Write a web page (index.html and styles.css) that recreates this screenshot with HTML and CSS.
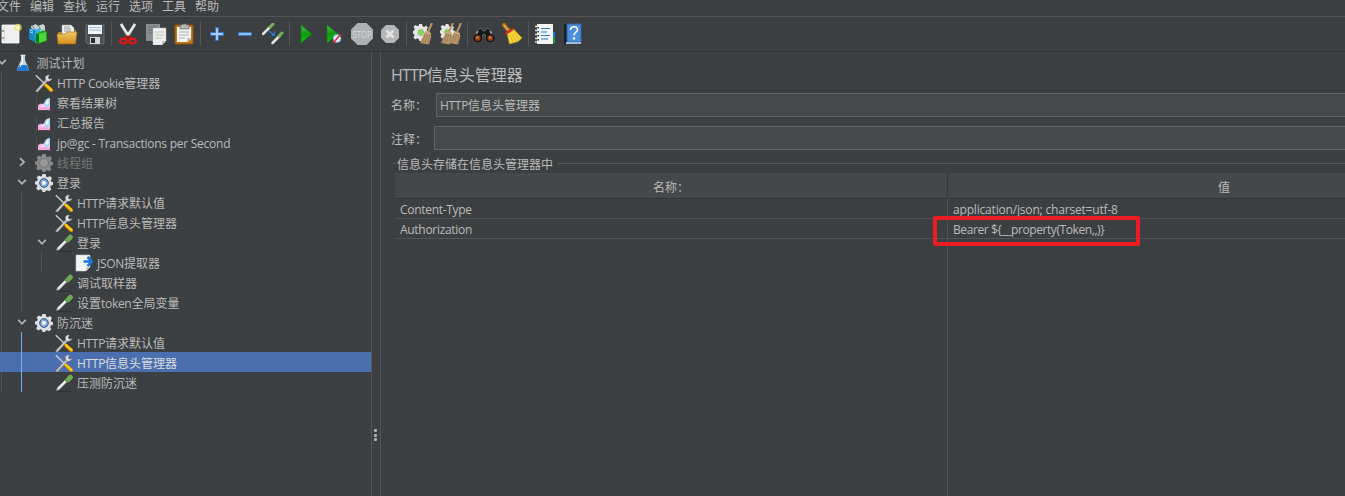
FILE: index.html
```
<!DOCTYPE html>
<html lang="zh-CN">
<head>
<meta charset="utf-8">
<title>HTTP信息头管理器</title>
<link rel="stylesheet" href="styles.css">
</head>
<body>
<svg class="defs" aria-hidden="true">
<defs>
<linearGradient id="gGreen" x1="0" y1="0" x2="0" y2="1"><stop offset="0" stop-color="#5cb85c"/><stop offset=".5" stop-color="#0c9a10"/><stop offset="1" stop-color="#14c414"/></linearGradient>
<linearGradient id="gGold" x1="0" y1="0" x2="0" y2="1"><stop offset="0" stop-color="#f3c767"/><stop offset="1" stop-color="#d19020"/></linearGradient>
<radialGradient id="gBall"><stop offset="0" stop-color="#eaf3fc"/><stop offset="1" stop-color="#4a7cba"/></radialGradient>
<symbol id="tools" viewBox="0 0 18 18"><path d="M2 17 12 6" stroke="#777" stroke-width="3" stroke-linecap="round"/><path d="M2 17 12 6" stroke="#d0d0d0" stroke-width="1.500" stroke-linecap="round"/><path d="M13 1c-2 .5-3 2-2.600 4l1.600 2c2 .8 4.500-.5 5-2.500l-2.500.8-1.500-1.600 1.500-2.500z" fill="#e0e0e0" stroke="#777" stroke-width=".4"/><path d="M.8 1.200 11 11" stroke="#c8c8c8" stroke-width="1.500"/><path d="m11 11.500 5.200 5" stroke="#bd8500" stroke-width="3.400" stroke-linecap="round"/><path d="m11 11 5.500 5" stroke="#ffc414" stroke-width="2.400" stroke-linecap="round"/></symbol>
<symbol id="chart" viewBox="0 0 18 18"><path d="M1.500 2v14.500H16" fill="none" stroke="#5b5d5f" stroke-dasharray="1 1"/><path d="m3 11 3-1.500L9 11l6 0v5H3z" fill="#f3b4e0"/><path d="m3 16 5-6 7-6v12z" fill="#f9dcf3"/><path d="M9 11c0-4 2-7 6-7v7l-3 3z" fill="#a9d0f0"/><path d="m10.500 9 3-4.500v5l-2 2z" fill="#f3faff"/><path d="m3 12 4 1.500 3-1.500 2 2 3-1v3H3z" fill="#f3a8dc"/></symbol>
<symbol id="gear" viewBox="0 0 18 18"><path d="m7.300 0 3.400 0 .5 2.600 1.600.7L15 2l2 2.200-1.300 2.200.6 1.400L18 8v3l-2.100.6-.7 1.700 1.200 2-2.200 2-2.100-1.100-1.500.6-.6 1.700H7.500L7 15.900l-1.700-.7-2 1.200-2.200-2 1.200-2.200-.6-1.500L0 10.200V7.600L2.100 7l.7-1.600-1.200-2 2.200-2 2 1.100 1.100-.5z" fill="#dedfe0"/><circle cx="9" cy="9" r="4.400" fill="url(#gBall)" stroke="#41699d" stroke-width="1"/><path d="m7.500 6.500 4 2.500-4 2.500z" fill="#fff"/></symbol>
<symbol id="gearOff" viewBox="0 0 18 18"><path d="m7.300 0 3.400 0 .5 2.600 1.600.7L15 2l2 2.200-1.300 2.200.6 1.400L18 8v3l-2.100.6-.7 1.700 1.200 2-2.200 2-2.100-1.100-1.500.6-.6 1.700H7.500L7 15.900l-1.700-.7-2 1.200-2.200-2 1.200-2.200-.6-1.500L0 10.200V7.600L2.100 7l.7-1.600-1.200-2 2.200-2 2 1.100 1.100-.5z" fill="#898989"/><circle cx="9" cy="9" r="4.500" fill="#989898" stroke="#757575"/></symbol>
<symbol id="pipette" viewBox="0 0 18 18"><path d="M3 17.500h13" stroke="#2c2f30" stroke-width="1"/><path d="m1.500 16 1-2.500 8-8 2 2-8 8-2.500 1z" fill="#dfe2df" stroke="#858985" stroke-width=".6"/><path d="m4 13 6.500-6.500" stroke="#fff"/><path d="m9.800 4.800 3.500 3.500" stroke="#3c7c2b" stroke-width="1.800"/><path d="m10.800 5.500 3-3.800c1.800-2 5 .7 3.400 2.800l-3.800 3.500z" fill="#68ad4c" stroke="#9bcd84" stroke-width=".5"/></symbol>
<symbol id="extract" viewBox="0 0 18 18"><path d="M1 1h14v12l-4 4H1z" fill="#f3f4f4" stroke="#c7caca" stroke-width=".6"/><path d="m11 17 .5-4 3.500 0z" fill="#c2c6c8"/><path d="M8.500 7.500h7M12.500 3l4.500 4.500-4.500 4.500" fill="none" stroke="#1676da" stroke-width="2.500"/></symbol>
<symbol id="flask" viewBox="0 0 18 18"><path d="M7 1h4v5l4 9c.4 1-.3 2-1.500 2h-9C3.300 17 2.600 16 3 15l4-9z" fill="#c3d6e5"/><path d="m5.500 11 7 0 2.500 4c.4 1-.3 2-1.500 2h-9C3.300 17 2.600 16 3 15z" fill="#2379cf"/><path d="M8.500 2v6L6 13" fill="none" stroke="#fff"/><path d="M6.500 1.200h5" stroke="#eef4f8"/></symbol>
<symbol id="down" viewBox="0 0 10 10"><path d="m1.200 2.800 3.800 4 3.800-4" fill="none" stroke="#afb1b3" stroke-width="1.800"/></symbol>
<symbol id="right" viewBox="0 0 10 10"><path d="m3 1.200 4 3.800-4 3.800" fill="none" stroke="#afb1b3" stroke-width="1.800"/></symbol>
<symbol id="broom" viewBox="0 0 13 22"><path d="m12 0-4 9" stroke="#bf9568" stroke-width="2"/><path d="m5.500 8 5 1.500.8 4L9 21.500 0 20z" fill="#b8976c"/><path d="m6 10-4 10m6-10-3 10m5-9-2 10" stroke="#8d6d4a" stroke-width=".6"/><path d="m5 9.500 6 1.500" stroke="#d8bd91"/></symbol>
<symbol id="cog" viewBox="0 0 18 18"><path d="m6.500 0 3 0 .7 2.400 1.500.7 2.100-1.500 2 2-1.300 2.200.6 1.500 2.400.7v2.500l-2.300.8-.7 1.600 1.200 2-2 2-2.200-1.200-1.500.6L9.300 18H6.600L6 15.800l-1.600-.7-2 1.200-2-2 1.200-2.200-.6-1.400-1-.5V7.500l1.200-.7.7-1.600L.6 3l2-1.900 2.200 1.200 1.200-.5z" fill="#e4e4e4"/><circle cx="8.300" cy="9" r="3.200" fill="#83d94f" stroke="#9fbd8c"/></symbol>
</defs>
</svg>

<nav class="menu"><span>文件</span><span>编辑</span><span>查找</span><span>运行</span><span>选项</span><span>工具</span><span>帮助</span></nav>

<div class="toolbar">
<svg viewBox="0 0 22 22"><path d="M2 2h17v18H2z" fill="#efefef" stroke="#fff" stroke-width=".8"/><path d="M4.500 3v16" stroke="#c9c9c9" stroke-width=".6"/><path d="M2 8h2M2 15h2" stroke="#555"/><circle cx="18" cy="4.500" r="3.800" fill="#f0e36b" opacity=".7"/><circle cx="18" cy="4.500" r="1.800" fill="#fffbd0"/></svg>
<svg viewBox="0 0 22 22"><path d="m3 3 5-2 2 2 5-2 2 2v6L4 11z" fill="#c8d1d5"/><path d="m4 2 3 5M10 2l3 5" stroke="#778888"/><path d="m1 5 6 2v12l-6-3z" fill="#1787cc"/><path d="m2 7 3 1M2 9l3 1" stroke="#9be0ff"/><path d="m7 7 5-2v14l-5 1z" fill="#2eb4e9"/><path d="m8 11 7-4 4 2v9l-9 3-3-3z" fill="#20a51a"/><path d="m11 11 7-2v8l-7 3z" fill="#4bd53c"/><path d="m8 10 3 2v9l-3-3z" fill="#087710"/></svg>
<svg viewBox="0 0 22 22"><path d="M2 9h5l2-2h11v12H2z" fill="#bd831d"/><path d="M6 2h9l3 3v9H6z" fill="#f3f3f3" stroke="#aaa" stroke-width=".5"/><path d="M8 4h6M8 6h7M8 8h7" stroke="#999"/><path d="M1 11h8l2-2h10l-1.500 12H2z" fill="url(#gGold)" stroke="#a46b10" stroke-width=".6"/></svg>
<svg viewBox="0 0 22 22"><path d="M2 2h18v19H4l-2-2z" fill="#4c4e50" stroke="#777" stroke-width=".8"/><path d="M4 2h14v9H4z" fill="#eef5fb"/><path d="M5 4.500h12M5 7h12" stroke="#9ebedb"/><path d="M6 14h10v7H6z" fill="#d4d6d7"/><path d="M7 15h4v5H7z" fill="#292b2d"/></svg>
<i class="sep"></i>
<svg viewBox="0 0 22 22"><path d="m4 1 8.500 14M18 1 9.500 15" stroke="#b7b9b9" stroke-width="3.200"/><path d="m4 1 8 12M18 1l-8 12" stroke="#f1f1f1" stroke-width="1.500"/><path d="m9 13 3 3m1-3-3 3" stroke="#b40d0d" stroke-width="2.500"/><ellipse cx="6.500" cy="18" rx="3.200" ry="2.300" fill="none" stroke="#dd1717" stroke-width="2.300"/><ellipse cx="15.500" cy="18" rx="3.200" ry="2.300" fill="none" stroke="#dd1717" stroke-width="2.300"/></svg>
<svg viewBox="0 0 22 22"><path d="M1 1h14v17H1z" fill="#8b8e90"/><path d="M3 4h9M3 7h9M3 10h9" stroke="#6b6e70"/><path d="M8 5h13v13l-4 4H8z" fill="#f0f0ee" stroke="#bbb" stroke-width=".5"/><path d="M10 9h9M10 12h9M10 15h7" stroke="#c0c0c0"/><path d="m17 22 0-4h4z" fill="#bfc1c1"/></svg>
<svg viewBox="0 0 22 22"><rect x="2" y="2" width="18" height="19" rx="1" fill="#bd7b1d" stroke="#8d5308"/><path d="M4 4h14v12l-4 3H4z" fill="#f4f4f2"/><path d="M6 9h10M6 12h10M6 15h6" stroke="#aaa"/><path d="m14 19 .5-4 3.500 0z" fill="#bbb"/><path d="M7 2h2l1-1h3l1 1h2v4H7z" fill="#b6b7b7" stroke="#676767" stroke-width=".7"/></svg>
<i class="sep"></i>
<svg viewBox="0 0 22 22"><path d="M9.500 4.500h3v5h5v3h-5v5h-3v-5h-5v-3h5z" fill="#8fc0f4" stroke="#3a75bd"/><path d="M11 6v10M6 11h10" stroke="#b5d8fa"/></svg>
<svg viewBox="0 0 22 22"><path d="M4.500 9.500h13v3h-13z" fill="#8fc0f4" stroke="#3a75bd"/></svg>
<svg viewBox="0 0 22 22"><path d="m1 11 7-7" stroke="#dfe2dd" stroke-width="2.500" stroke-linecap="round"/><path d="m8 4 3-3" stroke="#75b556" stroke-width="3" stroke-linecap="round"/><path d="m10.500 20 7-7" stroke="#dfe2dd" stroke-width="2.500" stroke-linecap="round"/><path d="m17 13 3-3" stroke="#75b556" stroke-width="3" stroke-linecap="round"/><path d="m7 8 5 4" stroke="#2c77cf" stroke-width="1.500"/><path d="m13 8 0 5H9z" fill="#2c77cf"/></svg>
<i class="sep"></i>
<svg viewBox="0 0 22 22"><path d="m6 2 11 9L6 20z" fill="url(#gGreen)" stroke="#098009" stroke-width=".7"/></svg>
<svg viewBox="0 0 22 22"><path d="m4 2 11 9L4 20z" fill="url(#gGreen)" stroke="#098009" stroke-width=".7"/><circle cx="14" cy="15.500" r="4" fill="#e4eef8" stroke="#6f9bc8"/><path d="m10 20 8-9" stroke="#db2323" stroke-width="1.500"/></svg>
<svg viewBox="0 0 22 22"><path d="M6.500 0h9L22 6.500v9L15.500 22h-9L0 15.500v-9z" fill="#aeb0b1"/><text x="11" y="14.500" text-anchor="middle" textLength="19" lengthAdjust="spacingAndGlyphs">STOP</text></svg>
<svg viewBox="0 0 22 22"><path d="M7 2h8l5 5v8l-5 5H7l-5-5V7z" fill="#b3b5b6"/><path d="m7.500 7.500 7 7m0-7-7 7" stroke="#e4e4e4" stroke-width="2.500"/></svg>
<i class="sep"></i>
<svg viewBox="0 0 22 22"><use href="#cog" x="1" y="1" width="17" height="17"/><use href="#broom" x="8" y="0" width="13" height="22"/></svg>
<svg viewBox="0 0 22 22"><use href="#cog" x="0" y="1" width="16" height="16"/><use href="#broom" x="1" y="0" width="13" height="22"/><use href="#broom" x="9" y="0" width="13" height="22"/></svg>
<i class="sep"></i>
<svg viewBox="0 0 22 22"><path d="M5 6.500 8 5l2 3h2l2-3 3 1.500 4 8-7 3-2-6h-2l-2 6-7-3z" fill="#181819" stroke="#77797a" stroke-width=".7"/><path d="M5 8 3.500 11M17 8l1.500 3" stroke="#a2a2a2" stroke-width="1.500"/><circle cx="4.800" cy="15" r="3.600" fill="#904018" stroke="#111" stroke-width="1.500"/><circle cx="17.200" cy="15" r="3.600" fill="#904018" stroke="#111" stroke-width="1.500"/><circle cx="4.500" cy="14.500" r="1.200" fill="#d57c42"/><circle cx="17" cy="14.500" r="1.200" fill="#d57c42"/></svg>
<svg viewBox="0 0 22 22"><path d="m3 2 5 6" stroke="#b46f1d" stroke-width="4" stroke-linecap="round"/><path d="m3 2 4 5" stroke="#e5ad53" stroke-width="1.500"/><path d="M6 10.500 12.500 6 21 15l-4 3.500L8.500 21z" fill="#f5d43c" stroke="#bf9818" stroke-width=".7"/><path d="m9 12 3 7m-1-8 4 7m-2-9 5 7" stroke="#c9a21f" stroke-width=".6"/><path d="m5 10.500 7-4.500" stroke="#d52f23" stroke-width="2.500"/></svg>
<i class="sep"></i>
<svg viewBox="0 0 22 22"><path d="M14 9h7v6h-7z" fill="#1979d4"/><path d="M14 15h7v5h-7z" fill="#16a32a"/><path d="M3 1h16v20H3z" fill="#f3f5f7"/><path d="M7 5.500h9M7 9h6M7 12.500h9M7 16h7" stroke="#287bd0" stroke-width="1.200"/><path d="M1 3.500h3M1 7.500h3M1 11.500h3M1 15.500h3M1 19h3" stroke="#ddd" stroke-width="1.500"/><path d="M3.500 4h1.500v1.500H3.500zM3.500 8h1.500v1.500H3.500zM3.500 12h1.500v1.500H3.500zM3.500 16h1.500v1.500H3.500z" fill="#222"/></svg>
<svg viewBox="0 0 22 22"><path d="M2 1h3v20H2z" fill="#1b1e21"/><path d="M5 1h14v18H5z" fill="#4c8edb" stroke="#3167aa"/><path d="M4 20h15" stroke="#9cbcdc" stroke-width="2"/><path d="M8.500 7c0-4 7-4.500 7-.5 0 3-3.500 2.500-3.500 6" fill="none" stroke="#fff" stroke-width="1.500"/><circle cx="12" cy="15.500" r="1.200" fill="#fff"/></svg>
</div>

<main class="work">
<aside class="tree">
<div class="row d0"><svg class="arrow"><use href="#down"/></svg><svg class="ico"><use href="#flask"/></svg><span>测试计划</span></div>
<div class="kids k1">
<div class="row d1"><svg class="ico"><use href="#tools"/></svg><span><b>HTTP Cookie</b>管理器</span></div>
<div class="row d1"><svg class="ico"><use href="#chart"/></svg><span>察看结果树</span></div>
<div class="row d1"><svg class="ico"><use href="#chart"/></svg><span>汇总报告</span></div>
<div class="row d1"><svg class="ico"><use href="#chart"/></svg><span><b class="tps">jp@gc - Transactions per Second</b></span></div>
<div class="row d1 off"><svg class="arrow"><use href="#right"/></svg><svg class="ico"><use href="#gearOff"/></svg><span>线程组</span></div>
<div class="row d1"><svg class="arrow"><use href="#down"/></svg><svg class="ico"><use href="#gear"/></svg><span>登录</span></div>
<div class="kids k2">
<div class="row d2"><svg class="ico"><use href="#tools"/></svg><span><b>HTTP</b>请求默认值</span></div>
<div class="row d2"><svg class="ico"><use href="#tools"/></svg><span><b>HTTP</b>信息头管理器</span></div>
<div class="row d2"><svg class="arrow"><use href="#down"/></svg><svg class="ico"><use href="#pipette"/></svg><span>登录</span></div>
<div class="kids k3"><div class="row d3"><svg class="ico"><use href="#extract"/></svg><span><b>JSON</b>提取器</span></div></div>
<div class="row d2"><svg class="ico"><use href="#pipette"/></svg><span>调试取样器</span></div>
<div class="row d2"><svg class="ico"><use href="#pipette"/></svg><span>设置<b>token</b>全局变量</span></div>
</div>
<div class="row d1"><svg class="arrow"><use href="#down"/></svg><svg class="ico"><use href="#gear"/></svg><span>防沉迷</span></div>
<div class="kids k2 active">
<div class="row d2"><svg class="ico"><use href="#tools"/></svg><span><b>HTTP</b>请求默认值</span></div>
<div class="row d2 selected"><svg class="ico"><use href="#tools"/></svg><span><b>HTTP</b>信息头管理器</span></div>
<div class="row d2"><svg class="ico"><use href="#pipette"/></svg><span>压测防沉迷</span></div>
</div>
</div>
</aside>
<div class="divider"><i></i><i></i><i></i></div>
<section class="editor">
<h1><b>HTTP</b>信息头管理器</h1>
<div class="field name"><label>名称：</label><div class="input"><b>HTTP</b>信息头管理器</div></div>
<div class="field note"><label>注释：</label><div class="input"></div></div>
<div class="legend"><span>信息头存储在信息头管理器中</span></div>
<div class="grid">
<div class="th">名称：</div><div class="th">值</div>
<div class="td"><b>Content-Type</b></div><div class="td"><b class="json">application/json; charset=utf-8</b></div>
<div class="td"><b>Authorization</b></div><div class="td marked"><b class="bearer">Bearer ${__property(Token,,)}</b></div>
<div class="rest"></div><div class="rest"></div>
</div>
</section>
</main>
</body>
</html>
```
FILE: styles.css
```
*, *::before, *::after { box-sizing: border-box; }
body { margin: 0; width: 1345px; height: 496px; overflow: hidden; display: flex; flex-direction: column; background: #3c3f41; color: #bbb; font: 12px/20px "Open Sans", "Noto Sans CJK SC", sans-serif; white-space: nowrap; }
.defs { position: absolute; width: 0; height: 0; }
svg { display: block; flex: none; }
b { font-weight: 400; letter-spacing: -.3px; }
.menu { height: 17px; flex: none; display: flex; gap: 9px; margin-left: -3px; line-height: 14px; border-bottom: 1px solid #555; }
.menu span { width: 24px; }
.toolbar { height: 35px; flex: none; display: flex; align-items: center; padding-bottom: 1px; border-bottom: 1px solid #323436; }
.toolbar svg { width: 22px; height: 22px; margin: 0 3px; }
.toolbar svg:first-child { margin-left: 0; }
.toolbar text { font: 8.500px "Open Sans", sans-serif; fill: #dcdcdc; }
.sep { width: 1px; height: 25px; margin: 0 2px; background: #555; }
.work { flex: 1; display: flex; min-height: 0; }
.tree { width: 371px; flex: none; overflow: hidden; }
.row { height: 20px; display: flex; align-items: center; }
.row > span { margin-left: 4.500px; padding-top: 3px; }
.ico { width: 18px; height: 18px; margin-top: 1px; }
.arrow { width: 10px; height: 10px; margin-right: 8px; margin-left: -18px; }
.d0 { padding-left: 15px; }
.d0 .arrow { margin-right: 7px; }
.d1 { padding-left: 34.500px; }
.d2 { padding-left: 54.500px; }
.d3 { padding-left: 74.500px; }
.tps { letter-spacing: -.25px; }
.off { color: #777; }
.kids { background: linear-gradient(#515456, #515456) no-repeat 1px 0 / 1px 100%; }
.kids .kids { background-position: 21px 0; }
.kids .k3 { background-position: 41px 0; }
.kids .active { background: linear-gradient(#6db3f2, #6db3f2) no-repeat 21px 0 / 1px 100%; }
.selected { color: #ddd; background: linear-gradient(#6db3f2, #6db3f2) no-repeat 21px 0 / 1px 100% #4b6eaf; }
.divider { width: 10px; flex: none; border: solid #555; border-width: 0 1px; display: flex; flex-direction: column; align-items: center; gap: 1.500px; padding: 377px 1px 0 0; }
.divider i { width: 3px; height: 3px; border-radius: 1px; background: #afb1b3; }
.editor { flex: 1; min-width: 0; overflow: hidden; display: flex; flex-direction: column; padding-top: 11px; }
h1 { margin: 0 0 6px 10px; font-size: 16px; font-weight: 400; line-height: 24px; }
h1 b { letter-spacing: -.8px; }
.field { height: 24px; flex: none; display: flex; margin-left: 10px; margin-bottom: 9px; }
.field label { width: 45px; line-height: 26px; }
.input { flex: 1; margin-right: -2px; border: 1px solid #646464; background: #45494a; padding-left: 3px; line-height: 24px; }
.note label { width: 43px; line-height: 27px; }
.legend { display: flex; align-items: center; height: 20px; flex: none; margin-top: -6px; margin-left: 12px; gap: 4px; line-height: 20px; }
.legend span { padding-top: 3px; margin-left: -1px; }
.legend::before { content: ""; width: 3px; height: 1px; background: #555; margin-right: -2px; }
.legend::after { content: ""; flex: 1; height: 1px; background: #555; }
.grid { flex: 1; display: grid; grid-template-columns: 553px 552px; grid-template-rows: 26px 20px 20px 1fr; margin-left: 14px; }
.grid > :nth-child(odd) { border-right: 1px solid #505355; }
.th { background: #45484a; border-bottom: 1px solid #333638; text-align: center; line-height: 29px; }
.grid > .th:first-child { border-right-color: #353839; }
.td { padding-left: 5px; border-bottom: 1px solid #505355; line-height: 21px; position: relative; }
.json { letter-spacing: -.18px; }
.bearer { letter-spacing: -.42px; }
.marked::after { content: ""; position: absolute; left: -15px; top: -3px; width: 207px; height: 30px; border: 4px solid #ed1c24; border-radius: 2px; }
```
